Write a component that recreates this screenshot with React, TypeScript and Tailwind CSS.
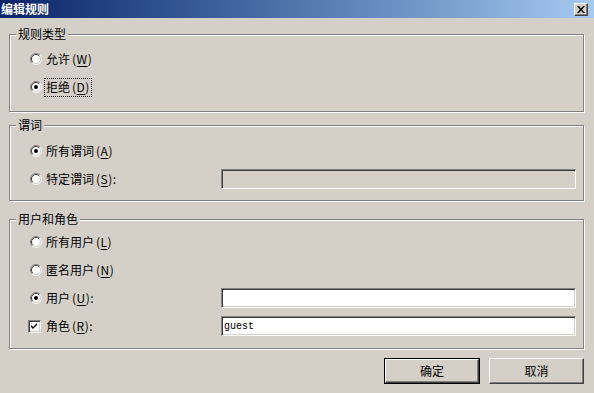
import React from "react";

// =============================================================================
// Win2000-style primitives
// =============================================================================
const FONT = "font-['SimSun','Noto_Sans_CJK_SC',sans-serif]";

function Radio({ checked }: { checked?: boolean }) {
  return (
    <svg width="12" height="12" viewBox="0 0 12 12" className="shrink-0">
      <circle cx="6" cy="6" r="4.5" fill="#ffffff" />
      <path d="M9.9 2.1 A5.5 5.5 0 0 0 2.1 9.9" fill="none" stroke="#808080" strokeWidth="1" />
      <path d="M2.1 9.9 A5.5 5.5 0 0 0 9.9 2.1" fill="none" stroke="#ffffff" strokeWidth="1" />
      <path d="M9.2 2.8 A4.5 4.5 0 0 0 2.8 9.2" fill="none" stroke="#404040" strokeWidth="1" />
      <path d="M2.8 9.2 A4.5 4.5 0 0 0 9.2 2.8" fill="none" stroke="#d4d0c8" strokeWidth="1" />
      {checked && <circle cx="6" cy="6" r="2" fill="#000000" />}
    </svg>
  );
}

function Checkbox({ checked }: { checked?: boolean }) {
  return (
    <div className="w-[13px] h-[13px] shrink-0 bg-white border border-t-[#808080] border-l-[#808080] border-r-white border-b-white shadow-[inset_1px_1px_0_#404040,inset_-1px_-1px_0_#d4d0c8] flex items-center justify-center">
      {checked && (
        <svg width="7" height="7" viewBox="0 0 7 7">
          <path d="M0 2 L2 4 L6 0 L6 2 L2 6 L0 4 Z" fill="#000000" />
        </svg>
      )}
    </div>
  );
}

function Mnemonic({ text, k }: { text: string; k: string }) {
  return (
    <span className="whitespace-nowrap">
      {text}
      <span className="pl-[2px] tracking-[0.5px]">
        (<span className="underline underline-offset-2">{k}</span>)
      </span>
    </span>
  );
}

function Field({ value, disabled }: { value?: string; disabled?: boolean }) {
  return (
    <div
      className={`h-[20px] w-[355px] border border-t-[#808080] border-l-[#808080] border-r-white border-b-white shadow-[inset_1px_1px_0_#404040,inset_-1px_-1px_0_#d4d0c8] flex items-center pl-[2px] font-['Liberation_Mono',monospace] text-[10px] text-black ${
        disabled ? "bg-[#d4d0c8]" : "bg-white"
      }`}
    >
      {value}
    </div>
  );
}

function Group({
  title,
  height,
  top,
  children,
}: {
  title: string;
  height: string;
  top: string;
  children: React.ReactNode;
}) {
  return (
    <div
      className={`${height} ${top} border border-[#808080] shadow-[inset_1px_1px_0_#ffffff,1px_1px_0_#ffffff] flex flex-col`}
    >
      <div className="-mt-[8px] ml-[6px] px-[2px] h-[14px] leading-[14px] w-fit bg-[#d4d0c8] text-black">
        {title}
      </div>
      {children}
    </div>
  );
}

function Row({ children }: { children: React.ReactNode }) {
  return <div className="h-[28px] flex items-center">{children}</div>;
}

function Button({ label, isDefault }: { label: string; isDefault?: boolean }) {
  const inner = (
    <div className="h-full w-full border border-t-white border-l-white border-r-[#404040] border-b-[#404040] shadow-[inset_-1px_-1px_0_#808080] flex items-center justify-center text-black">
      {label}
    </div>
  );
  if (isDefault) {
    return <div className="w-[96px] h-[26px] border border-black">{inner}</div>;
  }
  return <div className="w-[95px] h-[26px]">{inner}</div>;
}

// =============================================================================
// Dialog
// =============================================================================
export default function App() {
  return (
    <div className={`w-[594px] h-[393px] bg-[#d4d0c8] flex flex-col text-[12px] ${FONT}`}>
      {/* Title bar */}
      <div className="h-[18px] shrink-0 flex items-center bg-gradient-to-r from-[#0a246a] to-[#a6caf0]">
        <span className="pl-[1px] font-bold text-white leading-none">编辑规则</span>
        <div className="ml-auto mr-[6px] w-[14px] h-[13px] bg-[#d4d0c8] border border-t-white border-l-white border-r-[#404040] border-b-[#404040] shadow-[inset_-1px_-1px_0_#808080] flex items-center justify-center">
          <svg width="8" height="7" viewBox="0 0 8 7">
            <path d="M0 0 H2 L4 2.5 L6 0 H8 L5 3.5 L8 7 H6 L4 4.5 L2 7 H0 L3 3.5 Z" fill="#000000" />
          </svg>
        </div>
      </div>

      <div className="flex flex-col pl-[9px] pr-[10px]">
        {/* 规则类型 */}
        <Group title="规则类型" height="h-[78px]" top="mt-[16px]">
          <div className="mt-[4px] pl-[20px]">
            <Row>
              <Radio />
              <span className="ml-[3px] px-[1px]">
                <Mnemonic text="允许" k="W" />
              </span>
            </Row>
            <Row>
              <Radio checked />
              <span className="ml-[2px] h-[19px] px-[1px] flex items-center border border-dotted border-black">
                <Mnemonic text="拒绝" k="D" />
              </span>
            </Row>
          </div>
        </Group>

        {/* 谓词 */}
        <Group title="谓词" height="h-[76px]" top="mt-[13px]">
          <div className="mt-[5px] pl-[20px] pr-[7px]">
            <Row>
              <Radio checked />
              <span className="ml-[3px] px-[1px]">
                <Mnemonic text="所有谓词" k="A" />
              </span>
            </Row>
            <Row>
              <Radio />
              <span className="ml-[3px] px-[1px]">
                <Mnemonic text="特定谓词" k="S" />:
              </span>
              <div className="ml-auto">
                <Field disabled />
              </div>
            </Row>
          </div>
        </Group>

        {/* 用户和角色 */}
        <Group title="用户和角色" height="h-[130px]" top="mt-[18px]">
          <div className="mt-[2px] pl-[18px] pr-[7px]">
            <Row>
              <span className="ml-[2px]"><Radio /></span>
              <span className="ml-[3px] px-[1px]">
                <Mnemonic text="所有用户" k="L" />
              </span>
            </Row>
            <Row>
              <span className="ml-[2px]"><Radio /></span>
              <span className="ml-[3px] px-[1px]">
                <Mnemonic text="匿名用户" k="N" />
              </span>
            </Row>
            <Row>
              <span className="ml-[2px]"><Radio checked /></span>
              <span className="ml-[3px] px-[1px]">
                <Mnemonic text="用户" k="U" />:
              </span>
              <div className="ml-auto">
                <Field />
              </div>
            </Row>
            <Row>
              <Checkbox checked />
              <span className="ml-[4px] px-[1px]">
                <Mnemonic text="角色" k="R" />:
              </span>
              <div className="ml-auto">
                <Field value="guest" />
              </div>
            </Row>
          </div>
        </Group>

        {/* Buttons */}
        <div className="mt-[9px] flex justify-end gap-[9px]">
          <Button label="确定" isDefault />
          <Button label="取消" />
        </div>
      </div>
    </div>
  );
}
